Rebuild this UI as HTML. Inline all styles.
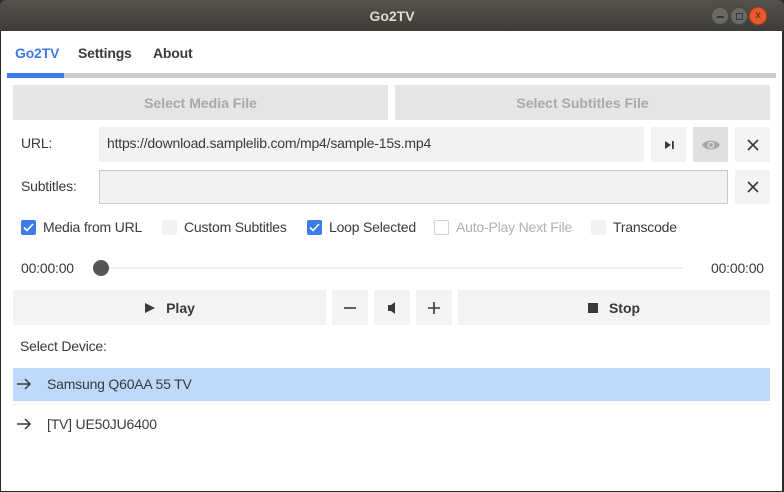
<!DOCTYPE html>
<html><head><meta charset="utf-8"><style>
*{margin:0;padding:0;box-sizing:border-box}
body{width:784px;height:492px;overflow:hidden;background:#2b2b2b;font-family:"Liberation Sans","DejaVu Sans",sans-serif;font-size:14px;color:#3a3a3a;position:relative}
.a{position:absolute}
#tb{left:0;top:0;width:784px;height:31px;background:linear-gradient(#55524c,#3e3c38);border-radius:6px 6px 0 0;color:#dfdbd2;font-weight:bold;text-align:center;line-height:32px;font-size:14px}
#win{left:1px;top:31px;width:781px;height:460px;background:#fff}
.btn{background:#f3f3f3;display:flex;align-items:center;justify-content:center;font-weight:bold;color:#3a3a3a}
.cb{width:15px;height:15px;border-radius:2px}
.on{background:#3b7bea}
.t{white-space:nowrap;letter-spacing:-0.2px}
</style></head><body>
<div id="tb" class="a">Go2TV</div>
<div class="a" style="left:711px;top:7px;width:18px;height:18px;border-radius:9px;background:#6b6964;border:1px solid #4a4844"><div class="a" style="left:5px;top:8px;width:7px;height:1.5px;background:#3a3936"></div></div>
<div class="a" style="left:730px;top:7px;width:18px;height:18px;border-radius:9px;background:#6b6964;border:1px solid #4a4844"><div class="a" style="left:5px;top:5px;width:7px;height:7px;border:1px solid #3a3936"></div></div>
<div class="a" style="left:749px;top:7px;width:18px;height:18px;border-radius:9px;background:#e9592b;border:1px solid #b8421c;color:#5a2210;font-size:10px;line-height:16px;text-align:center">x</div>
<div id="win" class="a"></div>
<div class="a t" style="left:15px;top:45px;font-weight:bold;color:#3b7bea">Go2TV</div>
<div class="a t" style="left:78px;top:45px;font-weight:bold">Settings</div>
<div class="a t" style="left:153px;top:45px;font-weight:bold">About</div>
<div class="a" style="left:7px;top:73px;width:769px;height:5px;background:#cccccc"></div>
<div class="a" style="left:7px;top:73px;width:57px;height:5px;background:#3b7bea"></div>
<div class="a btn" style="left:13px;top:85px;width:375px;height:35px;background:#e5e5e5;color:#a9a9a9">Select Media File</div>
<div class="a btn" style="left:395px;top:85px;width:375px;height:35px;background:#e5e5e5;color:#a9a9a9">Select Subtitles File</div>
<div class="a t" style="left:21px;top:135px">URL:</div>
<div class="a t" style="left:99px;top:127px;width:545px;height:35px;background:#f2f2f2;padding:8px 0 0 8px">https://download.samplelib.com/mp4/sample-15s.mp4</div>
<div class="a btn" style="left:651px;top:127px;width:35px;height:35px"><svg width="12" height="12" viewBox="0 0 12 12"><path d="M2 2L8 6L2 10Z" fill="#3a3a3a"/><rect x="9" y="2" width="1.8" height="8" fill="#3a3a3a"/></svg></div>
<div class="a btn" style="left:693px;top:127px;width:35px;height:35px;background:#e0e0e0"><svg width="20" height="14" viewBox="0 0 20 14"><path d="M1 7C4 1 16 1 19 7C16 13 4 13 1 7Z" fill="#a9a9a9"/><circle cx="10" cy="7" r="3.3" fill="#e0e0e0"/><circle cx="10" cy="7" r="2" fill="#a9a9a9"/></svg></div>
<div class="a btn" style="left:735px;top:127px;width:35px;height:35px"><svg width="12" height="12"><path d="M1 1L11 11M11 1L1 11" stroke="#3a3a3a" stroke-width="1.6"/></svg></div>
<div class="a t" style="left:21px;top:178px">Subtitles:</div>
<div class="a" style="left:99px;top:170px;width:629px;height:34px;background:#f2f2f2;border:1px solid #c9c9c9"></div>
<div class="a btn" style="left:735px;top:170px;width:35px;height:34px"><svg width="12" height="12"><path d="M1 1L11 11M11 1L1 11" stroke="#3a3a3a" stroke-width="1.6"/></svg></div>
<div class="a cb on" style="left:21px;top:220px"><svg width="15" height="15"><path d="M3 7.5L6 10.5L12 4" stroke="#fff" stroke-width="1.6" fill="none"/></svg></div>
<div class="a t" style="left:43px;top:219px">Media from URL</div>
<div class="a cb" style="left:162px;top:220px;background:#f2f2f2"></div>
<div class="a t" style="left:184px;top:219px">Custom Subtitles</div>
<div class="a cb on" style="left:307px;top:220px"><svg width="15" height="15"><path d="M3 7.5L6 10.5L12 4" stroke="#fff" stroke-width="1.6" fill="none"/></svg></div>
<div class="a t" style="left:329px;top:219px">Loop Selected</div>
<div class="a cb" style="left:434px;top:220px;border:1px solid #d0d0d0;background:#fff"></div>
<div class="a t" style="left:456px;top:219px;color:#b0b0b0">Auto-Play Next File</div>
<div class="a cb" style="left:591px;top:220px;background:#f2f2f2"></div>
<div class="a t" style="left:613px;top:219px">Transcode</div>
<div class="a t" style="left:21px;top:260px">00:00:00</div>
<div class="a" style="left:100px;top:267px;width:583px;height:2px;background:#eeeeee"></div>
<div class="a" style="left:93px;top:260px;width:16px;height:16px;border-radius:8px;background:#555"></div>
<div class="a t" style="left:711px;top:260px">00:00:00</div>
<div class="a btn" style="left:13px;top:290px;width:313px;height:35px"><svg width="12" height="12" style="margin-right:10px"><path d="M1 1L11 6L1 11Z" fill="#3a3a3a"/></svg>Play</div>
<div class="a btn" style="left:332px;top:290px;width:36px;height:35px"><svg width="14" height="14"><path d="M1 7H13" stroke="#3a3a3a" stroke-width="1.6"/></svg></div>
<div class="a btn" style="left:374px;top:290px;width:36px;height:35px"><svg width="10" height="14"><path d="M1 4H4L8 1V13L4 10H1Z" fill="#3a3a3a"/></svg></div>
<div class="a btn" style="left:416px;top:290px;width:36px;height:35px"><svg width="14" height="14"><path d="M1 7H13M7 1V13" stroke="#3a3a3a" stroke-width="1.6"/></svg></div>
<div class="a btn" style="left:458px;top:290px;width:312px;height:35px"><svg width="10" height="10" style="margin-right:11px"><rect width="10" height="10" fill="#3a3a3a"/></svg>Stop</div>
<div class="a t" style="left:20px;top:338px">Select Device:</div>
<div class="a" style="left:13px;top:368px;width:757px;height:33px;background:#bfd9fb"></div>
<div class="a" style="left:13px;top:404px;width:757px;height:1px;background:#f0f0f0"></div>
<svg class="a" style="left:16px;top:377px" width="16" height="14"><path d="M1 7H14M9 2L14 7L9 12" stroke="#3a3a3a" stroke-width="1.5" fill="none"/></svg>
<div class="a t" style="left:47px;top:376px">Samsung Q60AA 55 TV</div>
<svg class="a" style="left:16px;top:417px" width="16" height="14"><path d="M1 7H14M9 2L14 7L9 12" stroke="#3a3a3a" stroke-width="1.5" fill="none"/></svg>
<div class="a t" style="left:47px;top:416px">[TV] UE50JU6400</div>
</body></html>
